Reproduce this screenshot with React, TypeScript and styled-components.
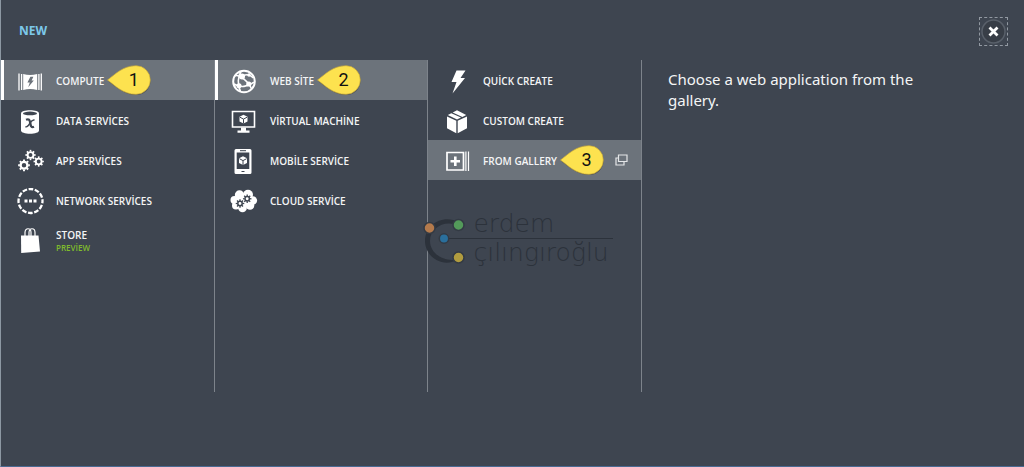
import React from "react";
import styled, { createGlobalStyle } from "styled-components";

const BG = "#3e4550";
const ACTIVE = "#6c737b";

const GlobalStyle = createGlobalStyle`
  * { box-sizing: border-box; }
  body {
    margin: 0;
    background: ${BG};
    color: #fff;
    font-family: "Open Sans", "Noto Sans", sans-serif;
  }
`;

const Page = styled.div`
  position: relative;
  display: flex;
  flex-direction: column;
  min-height: 100vh;
  background: ${BG};
  border-left: 1px solid #8d98a3;
  border-bottom: 1px solid #4a6a92;
`;

const Header = styled.header`
  display: flex;
  align-items: center;
  justify-content: space-between;
  height: 60px;
  padding: 2px 16px 0 18px;
`;

const Title = styled.h1`
  margin: 0;
  font-size: 12px;
  line-height: 16px;
  font-weight: 700;
  color: #7cc8ea;
`;

const CloseButton = styled.button`
  display: flex;
  padding: 0;
  width: 29px;
  height: 29px;
  align-items: center;
  justify-content: center;
  border: 1px dashed #9299a2;
  background: transparent;
  cursor: pointer;
`;

const Columns = styled.main`
  display: grid;
  grid-template-columns: 214fr 213fr 214fr 382fr;
  min-height: 332px;
`;

const Column = styled.nav`
  display: flex;
  flex-direction: column;
  min-width: 0;
  border-right: 1px solid #7d838b;
`;

const Item = styled.button<{ $active?: boolean; $marker?: boolean }>`
  display: flex;
  align-items: center;
  height: 40px;
  padding: 0 0 0 12px;
  border: 0;
  border-left: 3px solid ${(p) => (p.$marker ? "#fff" : p.$active ? ACTIVE : "transparent")};
  background: ${(p) => (p.$active ? ACTIVE : "transparent")};
  color: #f4f5f6;
  font: 600 10px/14px "Open Sans", "Noto Sans", sans-serif;
  text-align: left;
  white-space: nowrap;
  cursor: pointer;
`;

const Icon = styled.svg`
  flex: none;
  width: 28px;
  height: 28px;
  margin: 3px 12px 0 0;
`;

const Label = styled.span`
  display: flex;
  flex-direction: column;
  padding-top: 1px;
`;

const Tag = styled.small`
  font-size: 8px;
  line-height: 12px;
  font-weight: 600;
  color: #7fba2c;
`;

const Callout = styled.span`
  position: relative;
  display: flex;
  align-items: center;
  justify-content: center;
  flex: none;
  width: 44px;
  height: 32px;
  margin-left: 3px;
  padding-left: 9px;
  color: #111;
  font: 400 18px/20px Roboto, "Liberation Sans", sans-serif;
`;

const Drop = styled.svg`
  position: absolute;
  inset: 0;
`;

const Digit = styled.span`
  position: relative;
`;

const WindowIcon = styled.svg`
  flex: none;
  margin-left: 11px;
`;

const Description = styled.p`
  margin: 0;
  max-width: 310px;
  padding: 9px 24px 0 26px;
  font: 400 15px/21px "Noto Sans", "Open Sans", sans-serif;
  color: #f4f5f6;
`;

const Watermark = styled.div`
  position: absolute;
  top: 214px;
  left: 41.3%;
  display: flex;
  color: #2c323b;
  pointer-events: none;
`;

const Brand = styled.div`
  display: flex;
  flex-direction: column;
  min-width: 140px;
  font: 200 25px/26px "DejaVu Sans", "DejaVu Sans Light", sans-serif;
`;

const BrandLine = styled.span<{ $ruled?: boolean }>`
  height: ${(p) => (p.$ruled ? "25px" : "26px")};
  border-bottom: ${(p) => (p.$ruled ? "1px solid #2c323b" : "0")};
  line-height: ${(p) => (p.$ruled ? "20px" : "28px")};
`;

const gear = (cx: number, cy: number, r: number, color: string, w: number) => (
  <g fill="none" stroke={color}>
    <circle cx={cx} cy={cy} r={r} strokeWidth={w} />
    {[0, 45, 90, 135, 180, 225, 270, 315].map((a) => (
      <path
        key={a}
        d={`M${cx} ${cy - r - w / 2 + 0.4}v-1.7`}
        strokeWidth={w * 0.85}
        transform={`rotate(${a} ${cx} ${cy})`}
      />
    ))}
  </g>
);

const smallCube = (cx: number, cy: number) => (
  <g>
    <path
      d={`M${cx} ${cy - 4.4}l4 2v4.6l-4 2.2-4-2.2v-4.6z`}
      fill="#fff"
    />
    <path
      d={`M${cx - 3.6} ${cy - 2}l3.6 1.9 3.6-1.9M${cx} ${cy}v4.3`}
      fill="none"
      stroke={BG}
      strokeWidth="1"
    />
  </g>
);

const icons = {
  compute: (
    <>
      <path d="M3 5.5v17M5.6 6v16" stroke="#fff" strokeWidth="1.3" />
      <path d="M22.9 6v16M25.3 5.5v17" stroke="#fff" strokeWidth="1.3" />
      <path d="M7.2 6q7 2 14 0v16q-7-2-14 0z" fill="#fff" />
      <path d="M14.4 8.8h3l-1.8 3.7h2.2l-5.6 6.8 1.6-4.9h-2.4z" fill={ACTIVE} />
    </>
  ),
  data: (
    <>
      <path
        d="M5 5.5C5 3.500 9 2.300 14 2.300s9 1.200 9 3.200v17c0 2-4 3.200-9 3.200s-9-1.200-9-3.200z"
        fill="#fff"
      />
      <ellipse cx="14" cy="5.400" rx="7" ry="1.800" fill={BG} />
      <path
        d="M10 11.800c2.800-1.200 3.700 0 4.200 3s1 5.300 3.800 4"
        fill="none"
        stroke={BG}
        strokeWidth="2.300"
      />
      <path
        d="M18.600 12.200c-2-.8-3.300.7-4.600 3s-2.500 4.400-4.600 3.500"
        fill="none"
        stroke={BG}
        strokeWidth="1.400"
      />
    </>
  ),
  apps: (
    <>
      {gear(14.5, 7, 2.9, "#fff", 1.9)}
      {gear(8, 17.3, 3.400, "#fff", 2.300)}
      {gear(22.7, 13.5, 2.9, "#fff", 1.9)}
    </>
  ),
  network: (
    <>
      <circle
        cx="14.500"
        cy="13"
        r="12"
        fill="none"
        stroke="#fff"
        strokeWidth="2.300"
        strokeDasharray="4.700 1.583"
        strokeDashoffset="2.300"
      />
      <path d="M8.500 11.500h3v3h-3zM13 11.500h3v3h-3zM17.500 11.500h3v3h-3z" fill="#fff" />
    </>
  ),
  store: (
    <>
      <path d="M5 7.500h17.500l1.500 16-18.800 1.500z" fill="#fff" />
      <path
        d="M9 9V4.500C9 -.5 15 -.5 15 4.500V9M13 9V4.500C13 -.5 19 -.5 19 4.500V9"
        fill="none"
        stroke="#fff"
        strokeWidth="1.200"
      />
    </>
  ),
  web: (
    <>
      <circle cx="14" cy="13.500" r="10.800" fill="none" stroke="#fff" strokeWidth="2" />
      <path
        d="M5.500 7.500C10 7 19 14 21.500 21M11 3.500C8 8 7 17 10.500 23.500M13 8c4-2.500 7-1.500 10.500 2M4 16c6 4 14 3 20-2"
        fill="none"
        stroke="#fff"
        strokeWidth="1.600"
      />
      <circle cx="12" cy="8.500" r="3" fill="#fff" />
      <circle cx="9" cy="17.800" r="2.500" fill="#fff" />
      <circle cx="18.800" cy="16" r="2.600" fill="#fff" />
      <circle cx="19" cy="7" r="1.700" fill="#fff" />
    </>
  ),
  vm: (
    <>
      <path d="M2.500 3.500h22v15.500h-22z" fill="none" stroke="#fff" strokeWidth="1.600" />
      <path d="M11 19.500h5v3h3.500v2.300h-12v-2.300h3.500z" fill="#fff" />
      {smallCube(13.5, 11.200)}
    </>
  ),
  mobile: (
    <>
      <path
        fillRule="evenodd"
        d="M6 1h14q1.500 0 1.500 1.500v22q0 1.500-1.500 1.500h-14q-1.500 0-1.500-1.500v-22q0-1.500 1.500-1.500zM6.700 4.500v16.500h12.600v-16.500z"
        fill="#fff"
      />
      <path d="M10 2.700h6M11.500 23.500h3" stroke={BG} strokeWidth="1" />
      {smallCube(13, 12.700)}
    </>
  ),
  cloud: (
    <>
      <g fill="#fff">
        <circle cx="4.500" cy="12" r="4" />
        <circle cx="9.500" cy="7" r="4.700" />
        <circle cx="18" cy="6.800" r="5" />
        <circle cx="22.800" cy="12.500" r="4.300" />
        <circle cx="20" cy="17.500" r="4.300" />
        <circle cx="12.500" cy="20" r="4.300" />
        <circle cx="6" cy="17.500" r="4" />
        <circle cx="13.500" cy="13" r="7" />
      </g>
      {gear(10, 15.500, 2.200, BG, 1.500)}
      {gear(17.2, 10.800, 2.200, BG, 1.500)}
    </>
  ),
  bolt: <path d="M13.500 2.500h9l-5 7.500h4.500L9.500 25.500l4-11.500h-5z" fill="#fff" />,
  box: (
    <>
      <path d="M4 8.500l9.300 4.300v12.500l-9.300-5zM24 8.500l-9.300 4.300v12.500l9.300-5z" fill="#fff" />
      <path d="M4.800 7l3.500-1.800 9.700 4.400-4 1.900zM9.700 4.500l4.300-2.200 9.200 4.600-3.800 2z" fill="#fff" />
    </>
  ),
  gallery: (
    <>
      <path d="M4 4.500h16.500v17.500h-16.500z" fill="none" stroke="#fff" strokeWidth="1.700" />
      <path d="M12.300 8.500v9.500M7.500 13.200h9.500" stroke="#fff" strokeWidth="2.600" />
      <path d="M22.900 3.600v19.300M25.500 3.600v19.300" stroke="#fff" strokeWidth="1.200" />
    </>
  ),
};

type Entry = {
  icon: keyof typeof icons;
  label: string;
  tag?: string;
  step?: number;
  marker?: boolean;
  opensWindow?: boolean;
};

const columns: { name: string; items: Entry[] }[] = [
  {
    name: "Category",
    items: [
      { icon: "compute", label: "COMPUTE", step: 1, marker: true },
      { icon: "data", label: "DATA SERVİCES" },
      { icon: "apps", label: "APP SERVİCES" },
      { icon: "network", label: "NETWORK SERVİCES" },
      { icon: "store", label: "STORE", tag: "PREVİEW" },
    ],
  },
  {
    name: "Service",
    items: [
      { icon: "web", label: "WEB SİTE", step: 2, marker: true },
      { icon: "vm", label: "VİRTUAL MACHİNE" },
      { icon: "mobile", label: "MOBİLE SERVİCE" },
      { icon: "cloud", label: "CLOUD SERVİCE" },
    ],
  },
  {
    name: "Method",
    items: [
      { icon: "bolt", label: "QUİCK CREATE" },
      { icon: "box", label: "CUSTOM CREATE" },
      { icon: "gallery", label: "FROM GALLERY", step: 3, opensWindow: true },
    ],
  },
];

function StepCallout({ step }: { step: number }) {
  return (
    <Callout>
      <Drop width="44" height="32" viewBox="0 0 44 32" aria-hidden="true">
        <path
          d="M1.500 17.500C9 12 17 3 29.500 3a14 14 0 0 1 0 28C17 31 9 23 1.500 17.500z"
          fill="#2b3038"
          opacity=".45"
        />
        <path
          d="M.5 16C8 10.500 16 1.700 29 1.700a14.300 14.300 0 0 1 0 28.600C16 30.300 8 21.500.5 16z"
          fill="#fde24f"
          stroke="#c9a93a"
          strokeWidth=".7"
        />
      </Drop>
      <Digit>{step}</Digit>
    </Callout>
  );
}

export default function App() {
  return (
    <>
      <GlobalStyle />
      <Page>
        <Header>
          <Title>NEW</Title>
          <CloseButton aria-label="Close">
            <svg width="27" height="27" viewBox="0 0 27 27">
              <circle cx="13.500" cy="13.500" r="11.500" fill="#383e47" stroke="#59606a" strokeWidth="1.500" />
              <path d="M9.500 9.500l8 8M17.500 9.500l-8 8" stroke="#fff" strokeWidth="2.800" />
            </svg>
          </CloseButton>
        </Header>
        <Columns>
          {columns.map((column) => (
            <Column key={column.name} aria-label={column.name}>
              {column.items.map((item) => (
                <Item key={item.label} $active={!!item.step} $marker={item.marker}>
                  <Icon viewBox="0 0 28 28" aria-hidden="true">
                    {icons[item.icon]}
                  </Icon>
                  <Label>
                    {item.label}
                    {item.tag && <Tag>{item.tag}</Tag>}
                  </Label>
                  {item.step && <StepCallout step={item.step} />}
                  {item.opensWindow && (
                    <WindowIcon width="13" height="12" viewBox="0 0 13 12" aria-hidden="true">
                      <path
                        d="M3.500 1h8.500v6.500h-8.500zM3.500 4H1v7h8V7.500"
                        fill="none"
                        stroke="#e4e6e8"
                        strokeWidth="1.200"
                      />
                    </WindowIcon>
                  )}
                </Item>
              ))}
            </Column>
          ))}
          <Description>Choose a web application from the gallery.</Description>
        </Columns>
        <Watermark>
          <svg width="50" height="54" viewBox="0 0 50 54" aria-hidden="true">
            <path
              d="M36 8C20 0 2 10 2 27c0 16 18 28 34 18C22 49 7 40 7 27 7 14 22 5 36 12z"
              fill="#2c323b"
            />
            <path d="M20 24.500h30" stroke="#2c323b" />
            <g stroke="#333a44" strokeWidth="1.500">
              <circle cx="6.500" cy="14" r="5.500" fill="#b47a4c" />
              <circle cx="35.500" cy="11" r="5.500" fill="#539a5a" />
              <circle cx="21" cy="24.500" r="4.700" fill="#2a6f9c" />
              <circle cx="35.500" cy="43.500" r="5.500" fill="#b19c3f" />
            </g>
          </svg>
          <Brand>
            <BrandLine $ruled>erdem</BrandLine>
            <BrandLine>çılıngıroğlu</BrandLine>
          </Brand>
        </Watermark>
      </Page>
    </>
  );
}
